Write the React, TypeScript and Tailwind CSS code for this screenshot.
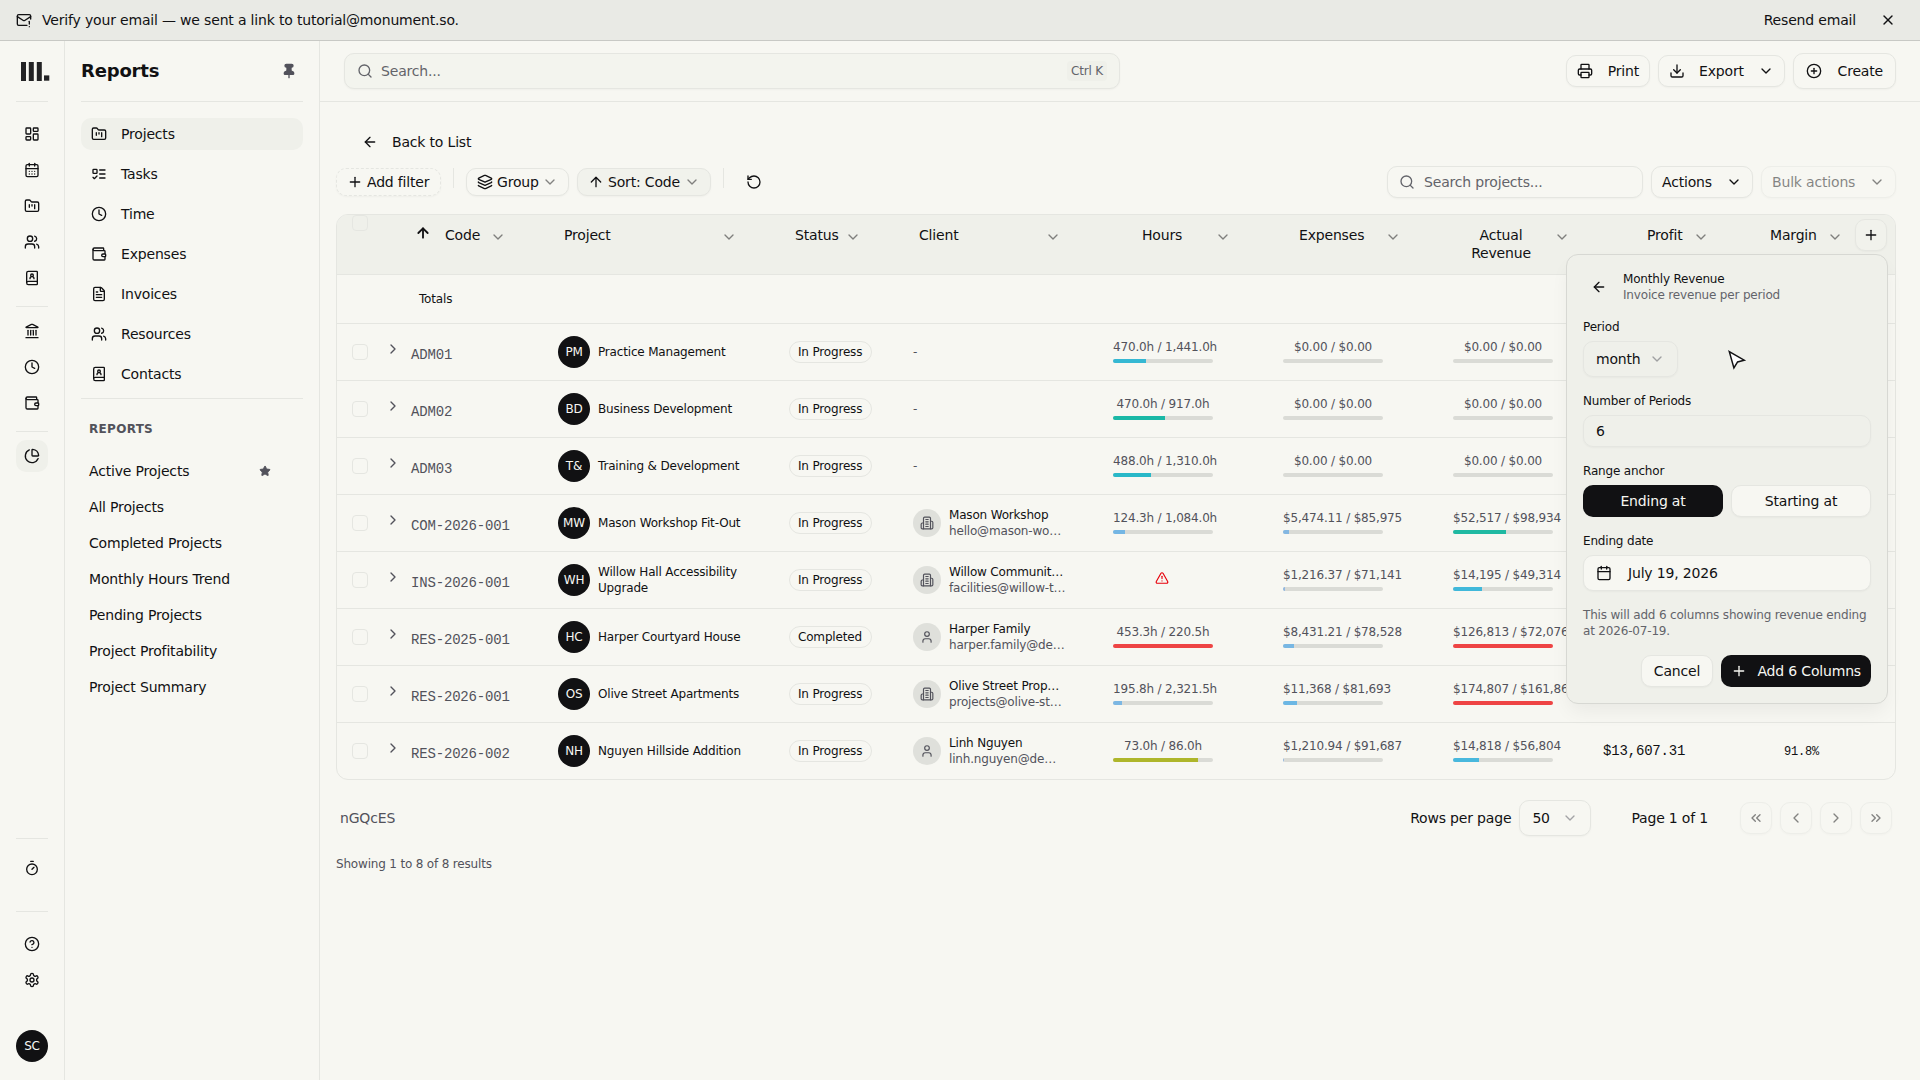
import React from "react";
import {
  ArrowLeft, ArrowUp, BookUser, Calendar, CalendarDays, ChartPie, ChevronDown, ChevronLeft,
  ChevronRight, ChevronsLeft, ChevronsRight, CircleHelp, CirclePlus, Clock, Download, FileText,
  FolderKanban, Landmark, Layers, LayoutDashboard, MailWarning, Pin, Plus, Printer,
  RotateCcw, Search, Star, Timer, TriangleAlert, User, Users, Wallet, X,
} from "lucide-react";

type Meter = { text: string; pct: number; color: string } | null;
type Row = {
  code: string;
  initials: string;
  name: string;
  status: string;
  client?: { name: string; email: string; kind: "org" | "person" };
  hours: Meter;
  expenses: Meter;
  revenue: Meter;
  profit?: string;
  margin?: string;
};

const zero = { text: "$0.00 / $0.00", pct: 0, color: "bg-[#78b4e6]" };

const rows: Row[] = [
  { code: "ADM01", initials: "PM", name: "Practice Management", status: "In Progress", hours: { text: "470.0h / 1,441.0h", pct: 33, color: "bg-[#35b8d3]" }, expenses: zero, revenue: zero },
  { code: "ADM02", initials: "BD", name: "Business Development", status: "In Progress", hours: { text: "470.0h / 917.0h", pct: 51.5, color: "bg-[#1ab8a6]" }, expenses: zero, revenue: zero },
  { code: "ADM03", initials: "T&", name: "Training & Development", status: "In Progress", hours: { text: "488.0h / 1,310.0h", pct: 37.5, color: "bg-[#29b8c8]" }, expenses: zero, revenue: zero },
  { code: "COM-2026-001", initials: "MW", name: "Mason Workshop Fit-Out", status: "In Progress", client: { name: "Mason Workshop", email: "hello@mason-wo…", kind: "org" }, hours: { text: "124.3h / 1,084.0h", pct: 11.5, color: "bg-[#74b6e4]" }, expenses: { text: "$5,474.11 / $85,975", pct: 6.4, color: "bg-[#83b7e2]" }, revenue: { text: "$52,517 / $98,934", pct: 53, color: "bg-[#1fb9a2]" } },
  { code: "INS-2026-001", initials: "WH", name: "Willow Hall Accessibility Upgrade", status: "In Progress", client: { name: "Willow Communit…", email: "facilities@willow-t…", kind: "org" }, hours: null, expenses: { text: "$1,216.37 / $71,141", pct: 2, color: "bg-[#91b7e0]" }, revenue: { text: "$14,195 / $49,314", pct: 29, color: "bg-[#40b8da]" } },
  { code: "RES-2025-001", initials: "HC", name: "Harper Courtyard House", status: "Completed", client: { name: "Harper Family", email: "harper.family@de…", kind: "person" }, hours: { text: "453.3h / 220.5h", pct: 100, color: "bg-[#ee4444]" }, expenses: { text: "$8,431.21 / $78,528", pct: 10.8, color: "bg-[#78b7e3]" }, revenue: { text: "$126,813 / $72,076", pct: 100, color: "bg-[#ee4444]" } },
  { code: "RES-2026-001", initials: "OS", name: "Olive Street Apartments", status: "In Progress", client: { name: "Olive Street Prop…", email: "projects@olive-st…", kind: "org" }, hours: { text: "195.8h / 2,321.5h", pct: 9, color: "bg-[#7cb7e3]" }, expenses: { text: "$11,368 / $81,693", pct: 14, color: "bg-[#6cb7e4]" }, revenue: { text: "$174,807 / $161,868", pct: 100, color: "bg-[#ee4444]" } },
  { code: "RES-2026-002", initials: "NH", name: "Nguyen Hillside Addition", status: "In Progress", client: { name: "Linh Nguyen", email: "linh.nguyen@de…", kind: "person" }, hours: { text: "73.0h / 86.0h", pct: 85, color: "bg-[#aeb62a]" }, expenses: { text: "$1,210.94 / $91,687", pct: 1.3, color: "bg-[#94b7e0]" }, revenue: { text: "$14,818 / $56,804", pct: 26, color: "bg-[#48b8dd]" }, profit: "$13,607.31", margin: "91.8%" },
];

const GRID = "grid grid-cols-[48px_138px_231px_124px_200px_170px_170px_170px_138px_134px_35px]";
const BTN = "flex items-center rounded-[10px] border border-[#e5e6e1] bg-[#f7f7f2] shadow-[0_1px_2px_rgba(0,0,0,0.035)]";

type IconProps = { size?: number; className?: string };

function StrokeIcon({ size = 16, className, children }: IconProps & { children: React.ReactNode }) {
  return (
    <svg width={size} height={size} viewBox="0 0 24 24" fill="none" stroke="currentColor" strokeWidth="2" strokeLinecap="round" strokeLinejoin="round" className={className}>
      {children}
    </svg>
  );
}

function TasksIcon(props: IconProps) {
  return (
    <StrokeIcon {...props}>
      <rect x="3" y="5" width="6" height="6" rx="1" />
      <path d="m3 17 2 2 4-4" />
      <path d="M13 6h8" />
      <path d="M13 12h8" />
      <path d="M13 18h8" />
    </StrokeIcon>
  );
}

function OfficeIcon(props: IconProps) {
  return (
    <StrokeIcon {...props}>
      <path d="M6 22V4a2 2 0 0 1 2-2h8a2 2 0 0 1 2 2v18Z" />
      <path d="M6 12H4a2 2 0 0 0-2 2v6a2 2 0 0 0 2 2h2" />
      <path d="M18 9h2a2 2 0 0 1 2 2v9a2 2 0 0 1-2 2h-2" />
      <path d="M10 6h4" />
      <path d="M10 10h4" />
      <path d="M10 14h4" />
      <path d="M10 18h4" />
    </StrokeIcon>
  );
}

function GearIcon(props: IconProps) {
  return (
    <StrokeIcon {...props}>
      <path d="M12.22 2h-.44a2 2 0 0 0-2 2v.18a2 2 0 0 1-1 1.73l-.43.25a2 2 0 0 1-2 0l-.15-.08a2 2 0 0 0-2.73.73l-.22.38a2 2 0 0 0 .73 2.73l.15.1a2 2 0 0 1 1 1.72v.51a2 2 0 0 1-1 1.74l-.15.09a2 2 0 0 0-.73 2.73l.22.38a2 2 0 0 0 2.73.73l.15-.08a2 2 0 0 1 2 0l.43.25a2 2 0 0 1 1 1.73V20a2 2 0 0 0 2 2h.44a2 2 0 0 0 2-2v-.18a2 2 0 0 1 1-1.73l.43-.25a2 2 0 0 1 2 0l.15.08a2 2 0 0 0 2.73-.73l.22-.39a2 2 0 0 0-.73-2.73l-.15-.08a2 2 0 0 1-1-1.74v-.5a2 2 0 0 1 1-1.74l.15-.09a2 2 0 0 0 .73-2.73l-.22-.38a2 2 0 0 0-2.73-.73l-.15.08a2 2 0 0 1-2 0l-.43-.25a2 2 0 0 1-1-1.73V4a2 2 0 0 0-2-2z" />
      <circle cx="12" cy="12" r="3" />
    </StrokeIcon>
  );
}

function Banner() {
  return (
    <div className="flex h-[41px] shrink-0 items-center border-b border-[#c8c9c5] bg-[#e9eae5] pr-6 pl-4">
      <MailWarning size={16} />
      <span className="ml-[10px]">Verify your email — we sent a link to tutorial@monument.so.</span>
      <span className="ml-auto">Resend email</span>
      <X size={16} className="ml-6" />
    </div>
  );
}

function RailIcon({ icon: Icon, active }: { icon: React.ElementType; active?: boolean }) {
  return (
    <div className={active ? "flex size-8 items-center justify-center rounded-[10px] bg-[#eff0ea]" : "flex size-8 items-center justify-center"}>
      <Icon size={16} />
    </div>
  );
}

function Rule() {
  return <div className="h-px w-8 bg-[#e5e6e1]" />;
}

function Rail() {
  return (
    <div className="flex w-[65px] shrink-0 flex-col items-center border-r border-[#e5e6e1] pb-[18px]">
      <div className="flex h-[60px] w-full items-center pl-[21px]">
        <svg width="29" height="19" viewBox="0 0 29 19" fill="#232325">
          <rect x="0" y="0" width="5" height="19" />
          <rect x="7.8" y="0" width="5" height="19" />
          <rect x="15.8" y="0" width="5" height="19" />
          <rect x="23" y="13.4" width="5.3" height="5.3" />
        </svg>
      </div>
      <Rule />
      <div className="mt-4 flex flex-col gap-1">
        <RailIcon icon={LayoutDashboard} />
        <RailIcon icon={CalendarDays} />
        <RailIcon icon={FolderKanban} />
        <RailIcon icon={Users} />
        <RailIcon icon={BookUser} />
      </div>
      <div className="mt-3 mb-2"><Rule /></div>
      <div className="flex flex-col gap-1">
        <RailIcon icon={Landmark} />
        <RailIcon icon={Clock} />
        <RailIcon icon={Wallet} />
      </div>
      <div className="mt-3 mb-2"><Rule /></div>
      <RailIcon icon={ChartPie} active />
      <div className="mt-auto"><Rule /></div>
      <div className="mt-[13px] mb-[27px]"><RailIcon icon={Timer} /></div>
      <Rule />
      <div className="mt-4 flex flex-col gap-1">
        <RailIcon icon={CircleHelp} />
        <RailIcon icon={GearIcon} />
      </div>
      <div className="mt-[34px] flex size-8 items-center justify-center rounded-full bg-[#111113] text-xs text-[#f7f7f2]">SC</div>
    </div>
  );
}

const navItems: [React.ElementType, string][] = [
  [FolderKanban, "Projects"], [TasksIcon, "Tasks"], [Clock, "Time"], [Wallet, "Expenses"],
  [FileText, "Invoices"], [Users, "Resources"], [BookUser, "Contacts"],
];
const savedReports = ["Active Projects", "All Projects", "Completed Projects", "Monthly Hours Trend", "Pending Projects", "Project Profitability", "Project Summary"];

function Sidebar() {
  return (
    <div className="flex w-[255px] shrink-0 flex-col border-r border-[#e5e6e1] px-4">
      <div className="flex h-[61px] shrink-0 items-center justify-between border-b border-[#e5e6e1] pr-[6px]">
        <h1 className="text-lg font-bold">Reports</h1>
        <Pin size={16} className="fill-[#52525b] text-[#52525b]" />
      </div>
      <div className="mt-4 flex flex-col gap-2 border-b border-[#e5e6e1] pb-2">
        {navItems.map(([Icon, label], i) => (
          <div key={label} className={i === 0 ? "flex h-8 items-center rounded-[10px] bg-[#eff0ea] pl-[10px]" : "flex h-8 items-center pl-[10px]"}>
            <Icon size={16} />
            <span className="ml-[14px]">{label}</span>
          </div>
        ))}
      </div>
      <div className="mt-[22px] px-2 text-xs font-bold tracking-wide text-[#52525b]">REPORTS</div>
      <div className="mt-4 flex flex-col">
        {savedReports.map((r, i) => (
          <div key={r} className="flex h-9 items-center justify-between pr-8 pl-2">
            <span>{r}</span>
            {i === 0 && <Star size={12} className="fill-[#52525b] text-[#52525b]" />}
          </div>
        ))}
      </div>
    </div>
  );
}

function TopBar() {
  return (
    <div className="flex h-[61px] shrink-0 items-center border-b border-[#e5e6e1] pr-6 pl-6">
      <div className="flex h-9 w-[776px] items-center rounded-[10px] border border-[#e5e6e1] bg-[#f3f4ee] px-3 text-[#63646a] shadow-[0_1px_2px_rgba(0,0,0,0.035)]">
        <Search size={16} />
        <span className="ml-2">Search...</span>
        <span className="ml-auto flex h-5 items-center rounded-sm bg-[#eff0ea] px-1 text-xs">Ctrl K</span>
      </div>
      <div className="ml-auto flex items-center gap-2">
        <div className={BTN + " h-8 w-[84px] px-[10px]"}><Printer size={16} /><span className="ml-auto">Print</span></div>
        <div className={BTN + " h-8 w-[127px] pr-[10px] pl-[10px]"}><Download size={16} /><span className="ml-[14px]">Export</span><ChevronDown size={16} className="ml-auto" /></div>
        <div className={BTN + " h-9 w-[103px] px-3"}><CirclePlus size={16} /><span className="ml-auto">Create</span></div>
      </div>
    </div>
  );
}

function Toolbar() {
  return (
    <div className="flex h-8 items-center">
      <div className="flex h-7 w-[105px] items-center rounded-[10px] border border-dashed border-[#e5e6e1] pl-[10px] shadow-[0_1px_2px_rgba(0,0,0,0.035)]">
        <Plus size={16} /><span className="ml-1">Add filter</span>
      </div>
      <div className="mx-3 mt-[2px] h-5 w-px self-start bg-[#e5e6e1]" />
      <div className={BTN + " h-7 w-[103px] px-[10px]"}>
        <Layers size={16} /><span className="ml-1">Group</span><ChevronDown size={16} className="ml-auto opacity-50" />
      </div>
      <div className="ml-2 flex h-7 w-[134px] items-center rounded-[10px] border border-[#e5e6e1] bg-[#f1f2ec] px-[10px] shadow-[0_1px_2px_rgba(0,0,0,0.035)]">
        <ArrowUp size={16} /><span className="ml-1">Sort: Code</span><ChevronDown size={16} className="ml-auto opacity-50" />
      </div>
      <div className="mx-3 mt-[2px] h-5 w-px self-start bg-[#e5e6e1]" />
      <div className="flex w-9 justify-center"><RotateCcw size={16} /></div>
      <div className="ml-auto flex items-center gap-2">
        <div className={BTN + " h-8 w-64 px-[11px] text-[#63646a]"}><Search size={16} /><span className="ml-[9px]">Search projects...</span></div>
        <div className={BTN + " h-8 w-[102px] px-[10px]"}><span>Actions</span><ChevronDown size={16} className="ml-auto" /></div>
        <div className={BTN + " h-8 w-[135px] px-[10px] opacity-50"}><span>Bulk actions</span><ChevronDown size={16} className="ml-auto" /></div>
      </div>
    </div>
  );
}

function Checkbox() {
  return <div className="size-4 rounded-[4px] border border-[#e5e6e1]" />;
}

function HeadCell({ label, className }: { label: string; className?: string }) {
  return (
    <div className={"flex pt-[11px] leading-[18px] " + (className ?? "")}>
      <span>{label}</span>
      <ChevronDown size={16} className="mt-[3px] ml-auto shrink-0 opacity-50" />
    </div>
  );
}

function MeterCell({ meter }: { meter: Meter }) {
  if (!meter) {
    return <div className="flex justify-center pt-[19px] pr-[2px]"><TriangleAlert size={14} className="text-[#e7000b]" /></div>;
  }
  return (
    <div className="flex flex-col items-center pt-[15px] text-xs text-[#52525b]">
      <div className="w-[100px] text-center whitespace-nowrap">{meter.text}</div>
      <div className="mt-1 h-1 w-[100px] overflow-hidden rounded-full bg-[#dadbd6]">
        <div className={"h-full " + meter.color} style={{ width: `${meter.pct}%` }} />
      </div>
    </div>
  );
}

function TableRow({ row }: { row: Row }) {
  return (
    <div className={GRID + " h-[57px] border-b border-[#e5e6e1] last:h-14 last:border-b-0"}>
      <div className="flex h-14 items-center pl-[15px]"><Checkbox /></div>
      <div className="flex h-14 items-center">
        <ChevronRight size={16} className="mb-[6px] text-[#52525b]" />
        <span className="mt-[6px] ml-[10px] font-['Liberation_Mono',monospace] text-[#52525b]">{row.code}</span>
      </div>
      <div className="flex h-14 items-center pl-[35px] text-xs">
        <div className="flex size-8 items-center justify-center rounded-full bg-[#111113] text-[#f7f7f2]">{row.initials}</div>
        <span className="ml-2 w-[150px]">{row.name}</span>
      </div>
      <div className="flex h-14 items-center pl-[35px]">
        <span className="flex h-[22px] items-center rounded-full border border-[#e5e6e1] pr-[9px] pl-2 text-xs whitespace-nowrap">{row.status}</span>
      </div>
      <div className="flex h-14 items-center pl-[35px] text-xs">
        {row.client ? (
          <>
            <div className="flex size-7 items-center justify-center rounded-full bg-[#dfe0db] text-[#52525b]">
              {row.client.kind === "org" ? <OfficeIcon size={14} /> : <User size={14} />}
            </div>
            <div className="ml-2">
              <div>{row.client.name}</div>
              <div className="text-[#52525b]">{row.client.email}</div>
            </div>
          </>
        ) : (
          <span className="text-[#52525b]">-</span>
        )}
      </div>
      <MeterCell meter={row.hours} />
      <MeterCell meter={row.expenses} />
      <MeterCell meter={row.revenue} />
      <div className="flex h-14 items-center pl-[15px] font-['Liberation_Mono',monospace]">{row.profit}</div>
      <div className="flex h-14 items-center pt-[2px] pl-[58px] font-['Liberation_Mono',monospace] text-xs">{row.margin}</div>
      <div />
    </div>
  );
}

function Table() {
  return (
    <div className="mt-4 overflow-hidden rounded-xl border border-[#e5e6e1]">
      <div className={GRID + " h-[60px] border-b border-[#e5e6e1] bg-[#eff0ea]"}>
        <div className="pl-[15px]"><Checkbox /></div>
        <div className="flex pt-[11px] pr-[17px] pl-[30px] leading-[18px]">
          <ArrowUp size={16} strokeWidth={2.75} className="-mt-[1px]" />
          <span className="ml-[14px]">Code</span>
          <ChevronDown size={16} className="mt-[3px] ml-auto opacity-50" />
        </div>
        <HeadCell label="Project" className="pr-[17px] pl-[41px]" />
        <HeadCell label="Status" className="pr-[17px] pl-[41px]" />
        <HeadCell label="Client" className="pr-[17px] pl-[41px]" />
        <HeadCell label="Hours" className="pr-[17px] pl-[64px]" />
        <HeadCell label="Expenses" className="pr-[17px] pl-[51px]" />
        <HeadCell label="Actual Revenue" className="pr-[18px] pl-[52px] text-center [&>span]:w-[62px]" />
        <HeadCell label="Profit" className="pr-[17px] pl-[59px]" />
        <HeadCell label="Margin" className="pr-[17px] pl-[44px]" />
        <div className="relative z-10 mt-1 -ml-[5px] flex size-8 items-center justify-center rounded-[10px] border border-[#e5e6e1] bg-[#f1f2ec] shadow-[0_1px_2px_rgba(0,0,0,0.035)]">
          <Plus size={16} />
        </div>
      </div>
      <div className="h-[49px] border-b border-[#e5e6e1] pt-4 pl-[82px] text-xs">Totals</div>
      {rows.map((row) => <TableRow key={row.code} row={row} />)}
    </div>
  );
}

function Footer() {
  return (
    <div className="mt-5 flex h-9 items-center pr-1 pl-1">
      <span className="text-[#52525b]">nGQcES</span>
      <span className="ml-auto">Rows per page</span>
      <div className={BTN + " ml-2 h-9 w-[72px] px-3"}>
        <span>50</span><ChevronDown size={16} className="ml-auto text-[#52525b] opacity-50" />
      </div>
      <span className="ml-10">Page 1 of 1</span>
      <div className="ml-8 flex gap-2">
        {[ChevronsLeft, ChevronLeft, ChevronRight, ChevronsRight].map((Icon, i) => (
          <div key={i} className={BTN + " size-8 justify-center opacity-50"}><Icon size={16} /></div>
        ))}
      </div>
    </div>
  );
}

function RevenuePopover() {
  return (
    <div className="absolute top-[254px] left-[1566px] z-20 flex w-[322px] flex-col gap-4 rounded-xl border border-[#d7d8d3] bg-[#eff0ea] p-4 text-xs shadow-[0_10px_20px_-3px_rgba(0,0,0,0.06)]">
      <div className="flex items-center gap-2">
        <div className="flex size-8 items-center justify-center"><ArrowLeft size={16} /></div>
        <div>
          <div>Monthly Revenue</div>
          <div className="text-[#63646a]">Invoice revenue per period</div>
        </div>
      </div>
      <div className="flex flex-col items-start gap-[6px]">
        <div>Period</div>
        <div className="flex h-9 w-[95px] items-center rounded-[10px] border border-[#e5e6e1] px-3 text-sm shadow-[0_1px_2px_rgba(0,0,0,0.035)]">
          <span>month</span><ChevronDown size={16} className="ml-auto text-[#52525b] opacity-50" />
        </div>
      </div>
      <div className="flex flex-col gap-[6px]">
        <div>Number of Periods</div>
        <div className="flex h-8 items-center rounded-[10px] border border-[#e5e6e1] px-3 text-sm shadow-[0_1px_2px_rgba(0,0,0,0.035)]">6</div>
      </div>
      <div className="flex flex-col gap-[6px]">
        <div>Range anchor</div>
        <div className="grid grid-cols-2 gap-2 text-sm">
          <div className="flex h-8 items-center justify-center rounded-[10px] bg-[#111113] text-[#f7f7f2]">Ending at</div>
          <div className={BTN + " h-8 justify-center"}>Starting at</div>
        </div>
      </div>
      <div className="flex flex-col gap-[6px]">
        <div>Ending date</div>
        <div className={BTN + " h-9 px-3 text-sm"}><Calendar size={16} /><span className="ml-4">July 19, 2026</span></div>
      </div>
      <p className="text-[#63646a]">This will add 6 columns showing revenue ending at 2026-07-19.</p>
      <div className="flex justify-end gap-2 text-sm">
        <div className={BTN + " h-8 w-[72px] justify-center"}>Cancel</div>
        <div className="flex h-8 w-[150px] items-center rounded-[10px] bg-[#111113] pr-[10px] pl-[10px] text-[#f7f7f2]">
          <Plus size={16} /><span className="ml-auto whitespace-nowrap">Add 6 Columns</span>
        </div>
      </div>
    </div>
  );
}

function Pointer() {
  return (
    <svg className="absolute top-[349px] left-[1727px] z-30" width="20" height="22" viewBox="0 0 20 22">
      <path d="M2.3 2.6 L17.2 11.2 L10.6 12.9 L6.9 19 Z" fill="#fff" stroke="#111113" strokeWidth="1.5" />
    </svg>
  );
}

export default function App() {
  return (
    <div className="relative flex h-[1080px] w-[1920px] flex-col overflow-hidden bg-[#f7f7f2] font-['DejaVu_Sans',sans-serif] text-sm tracking-[-0.176px] text-[#111113]">
      <Banner />
      <div className="flex min-h-0 flex-1">
        <Rail />
        <Sidebar />
        <div className="flex min-w-0 flex-1 flex-col">
          <TopBar />
          <div className="flex flex-col pt-6 pr-6 pl-4">
            <div className="flex h-8 items-center pl-[26px]">
              <ArrowLeft size={16} /><span className="ml-[14px]">Back to List</span>
            </div>
            <div className="mt-2"><Toolbar /></div>
            <Table />
            <Footer />
            <div className="mt-5 text-xs text-[#52525b]">Showing 1 to 8 of 8 results</div>
          </div>
        </div>
      </div>
      <RevenuePopover />
      <Pointer />
    </div>
  );
}
